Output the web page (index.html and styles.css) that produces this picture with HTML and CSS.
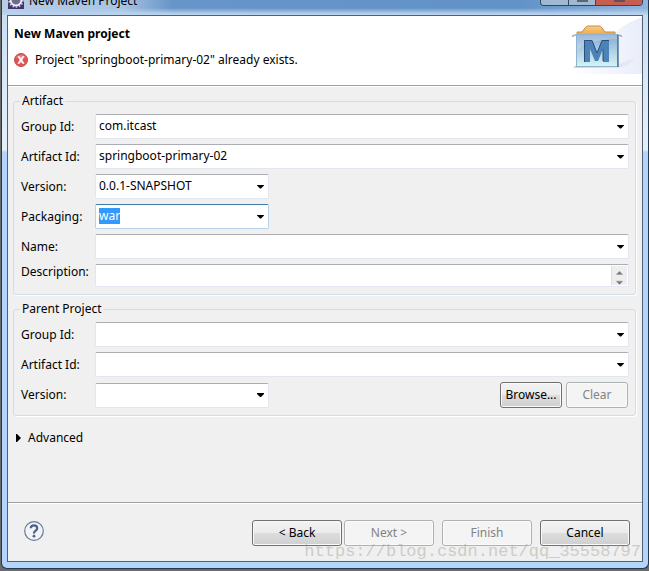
FILE: index.html
```html
<!DOCTYPE html>
<html lang="en">
<head>
<meta charset="utf-8">
<title>New Maven Project</title>
<link rel="stylesheet" href="styles.css">
</head>
<body>
<div class="window">
  <div class="titlebar">
    <svg class="app-icon" width="16" height="16" viewBox="0 0 16 16" aria-hidden="true">
      <rect width="16" height="16" fill="#43366f"/>
      <circle cx="8" cy="7" r="5.500" fill="#6f6a90" stroke="#efedf5" stroke-width="2"/>
      <circle cx="8" cy="7" r="7" fill="none" stroke="#d9d6e6" stroke-width="1.5" stroke-dasharray="1.6 1.6"/>
    </svg>
    <span class="window-title">New Maven Project</span>
    <div class="caption">
      <button class="cap cap-min" aria-label="Minimize"></button>
      <button class="cap cap-max" aria-label="Maximize"></button>
      <button class="cap cap-close" aria-label="Close"></button>
    </div>
  </div>
  <main class="client">
    <header class="banner">
      <div class="banner-text">
        <h1>New Maven project</h1>
        <p class="message">
          <svg width="14" height="14" viewBox="0 0 14 14" aria-hidden="true">
            <circle cx="7" cy="7" r="6.5" fill="#dc5558" stroke="#c94b50"/>
            <path d="M2 5a5.5 5.5 0 0 1 10 0z" fill="#eb9290" opacity=".6"/>
            <path d="M4 3.5h1.6L7 5.7l1.4-2.2H10L8 7l2.2 3.5H8.5L7 8.3l-1.5 2.2H3.8L6 7z" fill="#fff" stroke="#fff" stroke-width=".5"/>
          </svg>
          <span>Project "springboot-primary-02" already exists.</span>
        </p>
      </div>
      <svg class="banner-art" width="75" height="58" viewBox="0 0 75 58" aria-hidden="true">
        <defs>
          <linearGradient id="haze" x1="0" y1="0" x2="1" y2="0"><stop offset="0" stop-color="#fff"/><stop offset="1" stop-color="#e9edfa"/></linearGradient>
          <linearGradient id="box" x1="0" y1="0" x2="0" y2="1"><stop offset="0" stop-color="#86a7d3"/><stop offset=".5" stop-color="#afcfe5"/><stop offset="1" stop-color="#d5f4f3"/></linearGradient>
          <linearGradient id="tab" x1="0" y1="0" x2="0" y2="1"><stop offset="0" stop-color="#f7cf85"/><stop offset="1" stop-color="#efa541"/></linearGradient>
          <linearGradient id="shade" x1="0" y1="0" x2="1" y2="0"><stop offset="0" stop-color="#a9a0bb"/><stop offset="1" stop-color="#e9e8f4"/></linearGradient>
        </defs>
        <path d="M75 1Q58 7 48 17L38 34 5 56v2h70z" fill="url(#haze)"/>
        <path d="M50 49L69 41Q65 50 50 52H6l3-3z" fill="url(#shade)" opacity=".5"/>
        <path d="M10 19v-3h5l3-4q1-2 3-2h11q2 0 3 2l3 4h10v3z" fill="url(#tab)" stroke="#c08f4c"/>
        <path d="M5.500 21q0-2 4-2M54.500 21q0-2-4-2" fill="none" stroke="#aaa" stroke-width="1.500"/>
        <rect x="9.500" y="18.500" width="41" height="32" fill="url(#box)" stroke="#8fb4cf"/>
        <path d="M51 19v32" stroke="#23618c" stroke-width="1.200"/>
        <path d="M10 19h40v4Q23 23 10 34z" fill="#fff" opacity=".2"/>
        <path d="M17 46V24h8l5 13 5-13h7v22h-6V33l-5 12h-3l-5-12v13z" fill="#4b82b8"/>
        <path d="M17.500 46V24.500H25l5 12.500 5-12.500h7M36 45V33" fill="none" stroke="#2b4f78"/>
      </svg>
    </header>
    <form class="page">
      <fieldset>
        <legend>Artifact</legend>
        <div class="row"><label for="gid">Group Id:</label><div class="combo"><input id="gid" type="text" value="com.itcast"><button type="button" aria-label="Show group ids"></button></div></div>
        <div class="row"><label for="aid">Artifact Id:</label><div class="combo"><input id="aid" type="text" value="springboot-primary-02"><button type="button" aria-label="Show artifact ids"></button></div></div>
        <div class="row"><label for="ver">Version:</label><div class="combo short"><input id="ver" type="text" value="0.0.1-SNAPSHOT"><button type="button" aria-label="Show versions"></button></div></div>
        <div class="row"><label for="pack">Packaging:</label><div class="combo short active"><input id="pack" type="text" value="war"><button type="button" aria-label="Show packagings"></button></div></div>
        <div class="row"><label for="name">Name:</label><div class="combo"><input id="name" type="text"><button type="button" aria-label="Show names"></button></div></div>
        <div class="row row-area"><label for="desc">Description:</label><div class="area"><textarea id="desc" rows="1"></textarea>
          <svg width="16" height="19" viewBox="0 0 16 19" aria-hidden="true"><path d="M4.500 8.500L8 5l3.500 3.500z" fill="#777" stroke="#999" stroke-width=".5"/><path d="M4.500 15.500h7L8 19z" fill="#777" stroke="#999" stroke-width=".5"/></svg></div></div>
      </fieldset>
      <fieldset>
        <legend>Parent Project</legend>
        <div class="row"><label for="pgid">Group Id:</label><div class="combo"><input id="pgid" type="text"><button type="button" aria-label="Show parent group ids"></button></div></div>
        <div class="row"><label for="paid">Artifact Id:</label><div class="combo"><input id="paid" type="text"><button type="button" aria-label="Show parent artifact ids"></button></div></div>
        <div class="row"><label for="pver">Version:</label><div class="combo short"><input id="pver" type="text"><button type="button" aria-label="Show parent versions"></button></div>
          <div class="actions"><button type="button" class="btn small">Browse...</button><button type="button" class="btn small" disabled>Clear</button></div></div>
      </fieldset>
      <button type="button" class="advanced" aria-expanded="false"><svg width="5" height="8" viewBox="0 0 5 8" aria-hidden="true"><path d="M0 0h1l4 4-4 4H0z"/></svg>Advanced</button>
    </form>
    <footer class="footer">
      <button class="help" aria-label="Help">
        <svg width="20" height="20" viewBox="0 0 20 20" aria-hidden="true"><circle cx="10" cy="10" r="9.300" fill="#f1f3f7" stroke="#667999" stroke-width="1.200"/><path d="M6.800 7.200Q6.800 4.300 10 4.300t3.200 2.900q0 1.500-1.700 2.500T10 12.700" fill="none" stroke="#4c6088" stroke-width="2.200"/><circle cx="10" cy="15.200" r="1.400" fill="#4c6088"/></svg>
      </button>
      <div class="pair"><button class="btn">&lt; Back</button><button class="btn" disabled>Next &gt;</button></div>
      <button class="btn" disabled>Finish</button>
      <button class="btn">Cancel</button>
    </footer>
  </main>
</div>
<div class="watermark">https://blog.csdn.net/qq_35558797</div>
<script src="script.js"></script>
</body>
</html>
```
FILE: styles.css
```css
* { box-sizing: border-box; }
body {
  margin: 0;
  min-height: 100vh;
  display: flex;
  position: relative;
  padding: 0 0 2px 1px;
  background: #69696c;
  font: 12px/16px "Noto Sans", "Open Sans", sans-serif;
  color: #000;
}
button, input, textarea { font: inherit; color: inherit; }
.window {
  flex: 1;
  display: flex;
  flex-direction: column;
  padding: 0 5px 6px;
  border: 1px solid #26384c;
  border-top: 0;
  border-radius: 0 0 6px 6px;
  background: linear-gradient(#c4dcf5 0, #dce9f8 90px, #e5effa 150px, #b3d5fb 152px, #b3d5fb 100%);
}
.titlebar {
  height: 15px;
  margin: 0 -5px;
  padding: 0 5px 6px 6px;
  display: flex;
  align-items: flex-end;
  gap: 5px;
  background:
    linear-gradient(transparent 8px, #b9d3ee 14px),
    linear-gradient(90deg, #b5cce5, #a9c4e2 120px, #6795c9 170px, #6192c8 80%, #8eb4dd);
}
.app-icon { flex: none; }
.window-title { line-height: 16px; }
.caption {
  display: flex;
  align-self: flex-start;
  flex: none;
  height: 6px;
  margin-left: auto;
  border: 1px solid #34465e;
  border-top: 0;
  border-radius: 0 0 4px 4px;
  overflow: hidden;
}
.cap { border: 0; border-right: 1px solid #34465e; padding: 0; background: #a1b8d3; }
.cap-min { width: 28px; }
.cap-max { width: 27px; background: linear-gradient(90deg, transparent 8px, #5b6675 8px, #5b6675 19px, transparent 19px) 0 0/100% 2px no-repeat #a1b8d3; }
.cap-close { width: 46px; border: 0; background: linear-gradient(90deg, transparent 18px, #60505e 18px, #60505e 29px, transparent 29px) 0 0/100% 2px no-repeat #c65e50; }
.client {
  flex: 1;
  display: flex;
  flex-direction: column;
  border: 1px solid #53616f;
  background: #f0f0f0;
}
.banner {
  display: flex;
  justify-content: space-between;
  height: 70px;
  padding-left: 6px;
  background: #fff;
  border-bottom: 1px solid #a0a0a0;
}
.banner-text { padding-top: 10px; }
h1 { margin: 0 0 10px; font-size: 12px; line-height: 16px; }
.message { display: flex; align-items: center; gap: 7px; margin: 0; }
.page { flex: 1; padding: 6px 6px 0 5px; border-top: 1px solid #fff; }
fieldset {
  margin: 0 0 6px;
  padding: 5px 6px 7px;
  border: 1px solid #d3dde6;
  border-radius: 3px;
  box-shadow: 1px 1px #fff;
  min-width: 0;
}
legend { padding: 0 2px; line-height: 16px; }
.row { display: flex; align-items: center; margin-bottom: 5px; padding-left: 1px; }
.row:last-child { margin-bottom: 0; }
.row label { flex: none; width: 74px; }
.row-area { align-items: flex-start; }
.combo, .area {
  flex: 1;
  display: flex;
  height: 25px;
  min-width: 0;
  background: #fff;
  border: 1px solid #e2e7ef;
  border-top-color: #abadb3;
  border-radius: 2px;
}
.combo.short { flex: none; width: 174px; }
.combo.active { border-color: #b5d4ea; border-top-color: #3d7bad; }
.combo input {
  flex: 1;
  min-width: 0;
  padding: 0 3px 1px;
  border: 0;
  outline: 0;
  background: none;
}
input::selection { background: #39f; color: #fff; }
.combo button {
  width: 15px;
  border: 0;
  padding: 0;
  background: none;
  display: flex;
  align-items: center;
  justify-content: center;
}
.combo button::after {
  content: "";
  width: 7px;
  height: 4px;
  background: #000;
  clip-path: polygon(0 0, 100% 0, 100% 25%, 57% 100%, 43% 100%, 0 25%);
}
.area { height: 23px; padding: 1px; }
.area textarea { flex: 1; min-width: 0; height: 19px; padding: 0 2px; border: 0; resize: none; outline: 0; overflow: hidden; }
.area svg { background: #eee; border-left: 1px solid #e0e0e0; }
.actions { display: flex; gap: 4px; margin-left: auto; padding-right: 1px; }
.btn {
  width: 90px;
  height: 26px;
  padding: 0;
  border: 1px solid #707070;
  border-radius: 3px;
  background: linear-gradient(#f2f2f2, #ebebeb 48%, #dddddd 50%, #cfcfcf);
  box-shadow: inset 0 0 0 1px #fafafa;
}
.btn.small { width: 62px; }
.btn:disabled { color: #838383; background: #f4f4f4; border-color: #adb2b5; }
.advanced {
  display: flex;
  align-items: center;
  gap: 7px;
  margin-top: 14px;
  padding: 0 3px;
  border: 0;
  background: none;
}
.footer {
  display: flex;
  align-items: center;
  gap: 8px;
  padding: 17px 12px 15px 16px;
  border-top: 1px solid #a0a0a0;
  box-shadow: inset 0 1px #fff;
}
.help { margin-right: auto; padding: 0; border: 0; background: none; height: 24px; }
.pair { display: flex; gap: 2px; }
.watermark {
  position: absolute;
  right: 8px;
  bottom: 9px;
  font: 17px/20px "Liberation Mono", monospace;
  color: #98988c;
  opacity: .4;
  pointer-events: none;
}
```
FILE: script.js
```js
const packaging = document.getElementById("pack");
packaging.focus();
packaging.select();
```
